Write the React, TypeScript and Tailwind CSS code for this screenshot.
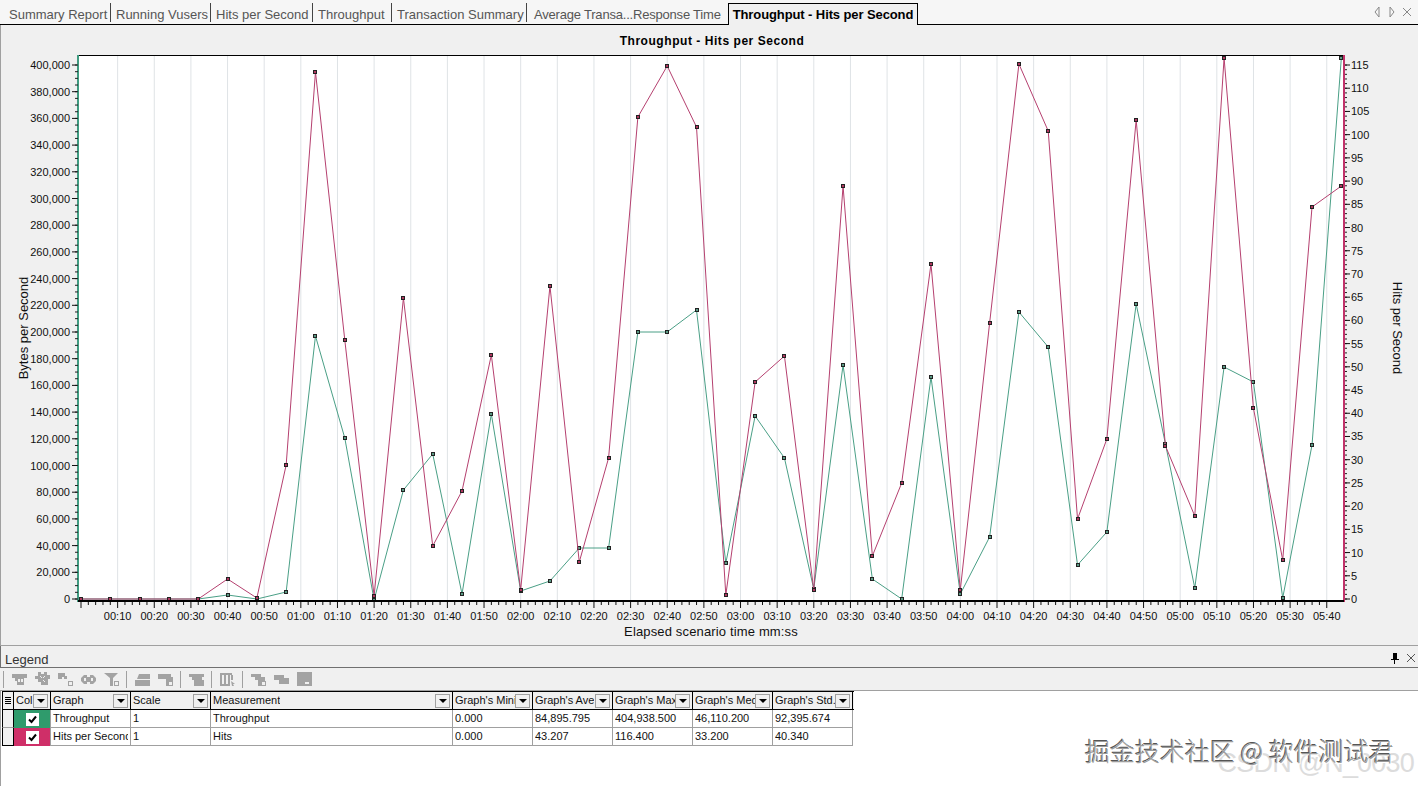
import type { ReactNode } from "react";

const xOf = (i: number) => 81 + i * 29.31;
const pink = [599, 599, 599, 599, 599, 579, 598, 465, 72, 340, 596, 298, 546, 491, 355, 590, 286, 562, 458, 117, 66, 127, 595, 382, 356, 590, 186, 556, 483, 264, 590, 323, 64, 131, 519, 439, 120, 446, 516, 58, 408, 560, 207, 186];
const green = [599, 599, 599, 599, 599, 595, 599, 592, 336, 438, 600, 490, 454, 594, 414, 591, 581, 548, 548, 332, 332, 310, 563, 416, 458, 589, 365, 579, 599, 377, 594, 537, 312, 347, 565, 532, 304, 444, 588, 367, 382, 598, 445, 58];

const leftTicks = Array.from({ length: 21 }, (_, i) => i * 20000);
const rightTicks = Array.from({ length: 24 }, (_, i) => i * 5);
const times = Array.from({ length: 34 }, (_, i) => {
  const s = (i + 1) * 10;
  return `${String(Math.floor(s / 60)).padStart(2, "0")}:${String(s % 60).padStart(2, "0")}`;
});

const tabs = [
  { label: "Summary Report", cls: "w-[108px] pl-[6px] border-r" },
  { label: "Running Vusers", cls: "w-[100px] pl-[5px] border-r" },
  { label: "Hits per Second", cls: "w-[102px] pl-[5px] border-r" },
  { label: "Throughput", cls: "w-[79px] pl-[5px] border-r" },
  { label: "Transaction Summary", cls: "w-[135px] pl-[5px] border-r" },
  { label: "Average Transa...Response Time", cls: "w-[201px] pl-[7px] tracking-[-0.2px]" },
];

const Series = ({ ys, color, marker }: { ys: number[]; color: string; marker: string }) => (
  <g>
    <polyline
      points={ys.map((y, i) => `${xOf(i)},${y}`).join(" ")}
      fill="none"
      stroke={color}
      strokeWidth="1"
    />
    {ys.map((y, i) => (
      <rect key={i} x={Math.round(xOf(i)) - 1.5} y={y - 1.5} width="3" height="3" fill={marker} stroke="#222" strokeWidth="1" />
    ))}
  </g>
);

const Chart = () => {
  const leftY = (v: number) => 599 - (v / 400000) * 534;
  const rightY = (v: number) => 599 - (v / 115) * 534;
  return (
    <svg width="1418" height="620" viewBox="0 25 1418 620" className="block font-['Liberation_Sans',Arial,sans-serif]">
      <rect x="78" y="55" width="1266" height="546" fill="#fff" />
      {times.map((_, i) => {
        const x = 81 + (i + 1) * 36.64;
        return <line key={i} x1={x} x2={x} y1="56" y2="600" stroke="#dfe3e6" />;
      })}
      <line x1="78" x2="1344" y1="55.5" y2="55.5" stroke="#000" />
      <Series ys={green} color="#4a9f86" marker="#5a9a84" />
      <Series ys={pink} color="#b5406f" marker="#b0365f" />
      <rect x="77" y="55" width="2" height="547" fill="#3f9b80" />
      <rect x="1343" y="55" width="2" height="547" fill="#c2326a" />
      <rect x="78" y="600" width="1266" height="2" fill="#000" />
      {Array.from({ length: 81 }, (_, i) => 599 - i * 6.675).map((y, i) => (
        <line key={i} x1="75" x2="78" y1={y} y2={y} stroke="#222" />
      ))}
      {Array.from({ length: 116 }, (_, i) => 599 - i * 4.643).map((y, i) => (
        <line key={i} x1="1345" x2="1347" y1={y} y2={y} stroke="#222" />
      ))}
      {Array.from({ length: 171 }, (_, i) => 81 + i * 7.328).map((x, i) => (
        <line key={i} x1={x} x2={x} y1="602" y2={i % 5 === 0 ? 608 : 605} stroke="#111" />
      ))}
      {leftTicks.map((v) => (
        <g key={v}>
          <line x1="72" x2="77" y1={leftY(v)} y2={leftY(v)} stroke="#111" />
          <text x="70" y={leftY(v) + 4} textAnchor="end" fontSize="11" fill="#111">
            {v.toLocaleString("en-US")}
          </text>
        </g>
      ))}
      {rightTicks.map((v) => (
        <g key={v}>
          <line x1="1345" x2="1350" y1={rightY(v)} y2={rightY(v)} stroke="#111" />
          <text x="1351" y={rightY(v) + 4} fontSize="11" fill="#111">
            {v}
          </text>
        </g>
      ))}
      {times.map((t, i) => (
        <text key={t} x={81 + (i + 1) * 36.64} y="620" textAnchor="middle" fontSize="11" fill="#111">
          {t}
        </text>
      ))}
      <text x="711" y="636" textAnchor="middle" fontSize="13" letterSpacing="0.15" fill="#111">
        Elapsed scenario time mm:ss
      </text>
      <text transform="translate(28 328) rotate(-90)" textAnchor="middle" fontSize="13" fill="#111">
        Bytes per Second
      </text>
      <text transform="translate(1393 328) rotate(90)" textAnchor="middle" fontSize="13" fill="#111">
        Hits per Second
      </text>
    </svg>
  );
};

const Caret = () => (
  <span className="flex h-[14px] w-[15px] shrink-0 items-center justify-center border border-[#a0a0a0] bg-[#f0f0f0]">
    <span className="h-0 w-0 border-x-[4px] border-t-[4px] border-x-transparent border-t-black" />
  </span>
);

const HeadCell = ({ label, w }: { label: string; w: string }) => (
  <div className={`flex h-[17px] ${w} shrink-0 items-center justify-between border-r border-black px-[2px]`}>
    <span className="overflow-hidden whitespace-nowrap">{label}</span>
    <Caret />
  </div>
);

const Cell = ({ label, w }: { label: string; w: string }) => (
  <div className={`h-[18px] ${w} shrink-0 border-b border-r border-[#a0a0a0] pl-[2px] pr-[2px] leading-[17px]`}>
    <span className="block overflow-hidden whitespace-nowrap">{label}</span>
  </div>
);

const Check = ({ bg }: { bg: string }) => (
  <div className={`flex h-[18px] w-[37px] shrink-0 items-center justify-center border-r border-[#a0a0a0] ${bg}`}>
    <span className="flex h-[13px] w-[13px] items-center justify-center bg-white">
      <svg width="9" height="9" viewBox="0 0 9 9">
        <path d="M1 4.5 L3.5 7 L8 1.5" fill="none" stroke="#000" strokeWidth="2" />
      </svg>
    </span>
  </div>
);

const Page = () => <rect x="10.5" y="9.5" width="4" height="4" fill="#f0f0f0" stroke="#a3a3a3" />;

// disabled toolbar glyphs, null = separator
const toolIcons: (ReactNode | null)[] = [
  <>
    <path d="M0 2h15v4h-3v7h-7v-4h-2v-3h-3z" />
    <path d="M6 7h2v3h-2zM9 7h2v3h-2z" fill="#f0f0f0" />
  </>,
  <>
    <path d="M3 0h3v2h3v-2h3v3h3v4h-2v6h-7v-3h-3v-3h-3v-3h3z" />
    <path d="M5 4l2 2M8 8l2 2M10 4l-2 2" stroke="#f0f0f0" fill="none" />
  </>,
  <>
    <path d="M0 1h7v3h2v3h-3v-2h-2v2h-4z" />
    <Page />
  </>,
  <path d="M0 6l3-3h3v2h3v-2h3l3 3v3l-3 3h-3v-2h-3v2h-3l-3-3zM3 6v3h2v-3zM10 6v3h2v-3z" fillRule="evenodd" />,
  <>
    <path d="M0 1h14l-5 5v8h-3v-8z" />
    <Page />
  </>,
  null,
  <>
    <path d="M4 2h11v5h-13zM0 8h15v6h-15z" />
  </>,
  <>
    <path d="M0 2h13v3h2v9h-7v-7h-8z" />
    <Page />
  </>,
  null,
  <>
    <path d="M0 2h15v3h-2v3h2v6h-10v-6h-2v-3h-3z" />
  </>,
  null,
  <>
    <path d="M0 1h2v12h-2zM4 1h2v12h-2zM8 1h2v12h-2zM0 1h12v2h-12zM0 12h10v2h-10zM11 3h2v5h-2z" />
    <path d="M11 9l4 3-2 0 1 2-2 0z" />
  </>,
  null,
  <>
    <path d="M0 2h10v3h4v9h-7v-6h-3v-3h-4z" />
    <Page />
  </>,
  <path d="M0 3h10v3h5v6h-10v-4h-5z" />,
  <>
    <path d="M0 0h15v14h-15z" />
    <path d="M8 10h4v2h-4z" fill="#f0f0f0" />
  </>,
];

const Toolbar = () => (
  <div className="flex h-[22px] items-center gap-[8px] pl-[4px]">
    <span className="-ml-px h-[17px] w-px bg-[#a0a0a0]" />
    {toolIcons.map((icon, i) =>
      icon ? (
        <svg key={i} width="15" height="15" viewBox="0 0 15 15" fill="#a3a3a3" className="shrink-0">
          {icon}
        </svg>
      ) : (
        <span key={i} className="-ml-px h-[17px] w-px shrink-0 bg-[#a0a0a0]" />
      ),
    )}
  </div>
);

const rows = [
  { bg: "bg-[#2f9b6c]", c: ["Throughput", "1", "Throughput", "0.000", "84,895.795", "404,938.500", "46,110.200", "92,395.674"] },
  { bg: "bg-[#cf2f68]", c: ["Hits per Second", "1", "Hits", "0.000", "43.207", "116.400", "33.200", "40.340"] },
];

export default function App() {
  return (
    <div className="relative h-[786px] w-[1418px] overflow-hidden bg-[#f0f0f0] font-['Liberation_Sans',Arial,sans-serif] text-[12px] text-[#111]">
      <div className="flex h-[25px] items-end border-b border-black bg-[#f6f6f6] pl-[3px] text-[13px] text-[#555]">
        {tabs.map((t) => (
          <div key={t.label} className={`mb-[2px] flex h-[19px] ${t.cls} items-center whitespace-nowrap border-[#444] pt-[5px] leading-[14px]`}>
            {t.label}
          </div>
        ))}
        <div className="relative top-px flex h-[22px] w-[190px] items-center justify-center border-x border-t border-black bg-[#f0f0f0] text-[13px] font-bold tracking-[-0.1px] text-black">
          Throughput - Hits per Second
        </div>
        <div className="ml-auto mr-[6px] flex items-center gap-[5px] self-center">
          <svg width="10" height="12" viewBox="0 0 10 12"><path d="M7 1 L3 6 L7 11 Z" fill="none" stroke="#888" /></svg>
          <svg width="10" height="12" viewBox="0 0 10 12"><path d="M3 1 L7 6 L3 11 Z" fill="none" stroke="#888" /></svg>
          <svg width="10" height="12" viewBox="0 0 10 12"><path d="M1 2 L9 10 M9 2 L1 10" stroke="#888" /></svg>
        </div>
      </div>

      <div className="relative h-[621px] border-b border-l border-[#a0a0a0]">
        <div className="absolute inset-x-0 top-[7px] pl-[5px] text-center text-[12px] font-bold tracking-[0.55px] text-black">
          Throughput - Hits per Second
        </div>
        <div className="-ml-px">
          <Chart />
        </div>
      </div>

      <div className="flex h-[22px] items-end border-b border-l border-[#707070] pl-[4px] text-[13px] leading-[14px] text-[#333]">
        Legend
        <div className="ml-auto mr-[2px] flex items-center gap-[6px] self-center pt-[3px]">
          <svg width="10" height="12" viewBox="0 0 10 12"><path d="M3 1h4v6h2v1h-4v4h-1v-4h-3v-1h2z" fill="#000" /></svg>
          <svg width="10" height="10" viewBox="0 0 10 10"><path d="M1 1 L9 9 M9 1 L1 9" stroke="#555" /></svg>
        </div>
      </div>

      <div className="border-b border-[#a0a0a0]">
        <Toolbar />
      </div>

      <div className="h-[95px] border-l border-[#a0a0a0] bg-white text-[11px]">
        <div className="ml-px w-[852px]">
          <div className="flex border-y border-black bg-[#f0f0f0]">
            <div className="flex h-[17px] w-[12px] shrink-0 flex-col items-center justify-center gap-px border-x border-black">
              <span className="h-px w-[6px] bg-black" />
              <span className="h-px w-[6px] bg-black" />
              <span className="h-px w-[6px] bg-black" />
              <span className="h-px w-[6px] bg-black" />
            </div>
            <HeadCell label="Col" w="w-[37px]" />
            <HeadCell label="Graph" w="w-[80px]" />
            <HeadCell label="Scale" w="w-[80px]" />
            <HeadCell label="Measurement" w="w-[242px]" />
            <HeadCell label="Graph's Mini" w="w-[80px]" />
            <HeadCell label="Graph's Ave" w="w-[80px]" />
            <HeadCell label="Graph's Max" w="w-[80px]" />
            <HeadCell label="Graph's Med" w="w-[80px]" />
            <HeadCell label="Graph's Std." w="w-[80px]" />
          </div>
          {rows.map((r, idx) => (
            <div key={idx} className="flex">
              <div className={`h-[18px] w-[12px] shrink-0 border-x border-b bg-[#f0f0f0] ${idx === 1 ? "border-black" : "border-x-black border-b-[#a0a0a0]"}`} />
              <Check bg={r.bg} />
              <Cell label={r.c[0]} w="w-[80px]" />
              <Cell label={r.c[1]} w="w-[80px]" />
              <Cell label={r.c[2]} w="w-[242px]" />
              <Cell label={r.c[3]} w="w-[80px]" />
              <Cell label={r.c[4]} w="w-[80px]" />
              <Cell label={r.c[5]} w="w-[80px]" />
              <Cell label={r.c[6]} w="w-[80px]" />
              <Cell label={r.c[7]} w="w-[80px]" />
            </div>
          ))}
        </div>
      </div>

      <div className="absolute bottom-[9px] right-[4px] text-[27px] leading-none tracking-[-0.8px] text-[#dcdcdc]">
        CSDN @N_0030
      </div>
      <div className="absolute left-[1085px] top-[735px] font-['Noto_Sans_CJK_SC',sans-serif] text-[25px] font-light leading-[30px] text-[#9c9c9c] [text-shadow:1px_1px_0_#fff,-1px_-1px_0_#555]">
        掘金技术社区 @ 软件测试君
      </div>
    </div>
  );
}
